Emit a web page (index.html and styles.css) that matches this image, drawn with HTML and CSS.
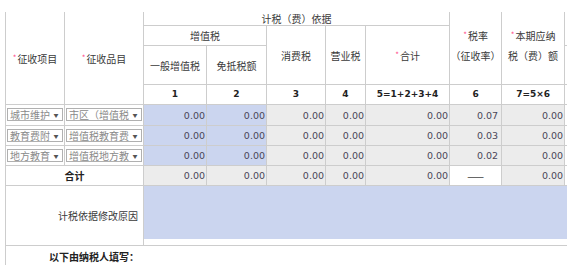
FILE: index.html
```html
<!DOCTYPE html>
<html lang="zh">
<head>
<meta charset="utf-8">
<link rel="stylesheet" href="styles.css">
</head>
<body>
<div class="page">
<table class="grid">
  <colgroup>
    <col class="c1"><col class="c2"><col class="c3"><col class="c4"><col class="c5">
    <col class="c6"><col class="c7"><col class="c8"><col class="c9"><col class="c10">
  </colgroup>
  <tr class="r1">
    <td rowspan="4" class="hd"><span class="req">*</span>征收项目</td>
    <td rowspan="4" class="hd"><span class="req">*</span>征收品目</td>
    <td colspan="5" class="hd">计税（费）依据</td>
    <td rowspan="3" class="hd two"><span class="req">*</span>税率<br>（征收率）</td>
    <td rowspan="3" class="hd two"><span class="req">*</span>本期应纳<br>税（费）额</td>
    <td rowspan="2" class="hd"></td>
  </tr>
  <tr class="r2">
    <td colspan="2" class="hd">增值税</td>
    <td rowspan="2" class="hd">消费税</td>
    <td rowspan="2" class="hd">营业税</td>
    <td rowspan="2" class="hd"><span class="req">*</span>合计</td>
  </tr>
  <tr class="r3">
    <td class="hd">一般增值税</td>
    <td class="hd">免抵税额</td>
    <td class="hd"></td>
  </tr>
  <tr class="r4">
    <td class="no">1</td><td class="no">2</td><td class="no">3</td><td class="no">4</td>
    <td class="no">5=1+2+3+4</td><td class="no">6</td><td class="no">7=5×6</td><td class="no"></td>
  </tr>
  <tr class="d1">
    <td class="selcell"><div class="sel"><span class="seltxt">城市维护建设税</span><span class="arr">▼</span></div></td>
    <td class="selcell"><div class="sel"><span class="seltxt">市区（增值税附征）</span><span class="arr">▼</span></div></td>
    <td class="num blue">0.00</td><td class="num blue">0.00</td>
    <td class="num gray">0.00</td><td class="num gray">0.00</td><td class="num gray">0.00</td>
    <td class="num gray rate">0.07</td><td class="num gray">0.00</td><td class="extra"><div class="box"></div></td>
  </tr>
  <tr class="d2">
    <td class="selcell"><div class="sel"><span class="seltxt">教育费附加</span><span class="arr">▼</span></div></td>
    <td class="selcell"><div class="sel"><span class="seltxt">增值税教育费附加</span><span class="arr">▼</span></div></td>
    <td class="num blue">0.00</td><td class="num blue">0.00</td>
    <td class="num gray">0.00</td><td class="num gray">0.00</td><td class="num gray">0.00</td>
    <td class="num gray rate">0.03</td><td class="num gray">0.00</td><td class="extra"><div class="box"></div></td>
  </tr>
  <tr class="d3">
    <td class="selcell"><div class="sel"><span class="seltxt">地方教育附加</span><span class="arr">▼</span></div></td>
    <td class="selcell"><div class="sel"><span class="seltxt">增值税地方教育附加</span><span class="arr">▼</span></div></td>
    <td class="num blue">0.00</td><td class="num blue">0.00</td>
    <td class="num gray">0.00</td><td class="num gray">0.00</td><td class="num gray">0.00</td>
    <td class="num gray rate">0.02</td><td class="num gray">0.00</td><td class="extra"><div class="box"></div></td>
  </tr>
  <tr class="tot">
    <td colspan="2" class="totlabel">合计</td>
    <td class="num gray">0.00</td><td class="num gray">0.00</td>
    <td class="num gray">0.00</td><td class="num gray">0.00</td><td class="num gray">0.00</td>
    <td class="dash">——</td><td class="num gray">0.00</td><td class="extra"></td>
  </tr>
  <tr class="reason">
    <td colspan="2" class="reasonlabel">计税依据修改原因</td>
    <td colspan="8" class="reasoncell"><div class="area"></div></td>
  </tr>
  <tr class="fill">
    <td colspan="10" class="filllabel">以下由纳税人填写：</td>
  </tr>
</table>
</div>
</body>
</html>
```

FILE: styles.css
```css
html, body {
  margin: 0;
  padding: 0;
  background: #ffffff;
  overflow: hidden;
}

.page {
  padding: 12px 0 0 5px;
  width: 700px;
}

.grid {
  border-collapse: collapse;
  table-layout: fixed;
  width: 620px;
  font-family: "Noto Sans CJK SC", "Noto Sans", sans-serif;
  font-size: 10px;
  color: #3a3a3a;
}

.c1 { width: 59px; }
.c2 { width: 79px; }
.c3 { width: 63px; }
.c4 { width: 60px; }
.c5 { width: 59px; }
.c6 { width: 40px; }
.c7 { width: 84px; }
.c8 { width: 52px; }
.c9 { width: 63px; }
.c10 { width: 61px; }

.grid td {
  border: 1px solid #cdcdcd;
  padding: 0;
  line-height: 13px;
  overflow: hidden;
  white-space: nowrap;
}

.r1 td { border-top: 0; }

.r1 { height: 13px; }
.r2 { height: 20px; }
.r3 { height: 39px; }
.r4 { height: 20px; }
.d1 { height: 21px; }
.d2 { height: 20px; }
.d3 { height: 20px; }
.tot { height: 20px; }
.reason { height: 60px; }
.fill { height: 22px; }

.hd {
  text-align: center;
  vertical-align: middle;
}

.hd.two {
  line-height: 20px;
  padding-bottom: 6px;
}

.req {
  color: #ff4d8a;
  font-size: 8px;
  vertical-align: 2px;
  margin-right: 1px;
}

.no {
  text-align: center;
  font-family: "DejaVu Sans", Verdana, sans-serif;
  font-weight: bold;
  font-size: 9px;
  color: #222;
}

.num {
  text-align: right;
  padding-right: 1px !important;
  font-family: "DejaVu Sans", Verdana, sans-serif;
  font-size: 9.5px;
  color: #4a4658;
}

.num.rate { padding-right: 3px !important; }

.blue { background: #cbd5ef; }
.gray { background: #ececec; }

.selcell {
  padding: 0 1px !important;
  vertical-align: middle;
}

.sel {
  display: flex;
  align-items: center;
  height: 11px;
  border: 1px solid #b0b0b0;
  background: #ffffff;
  margin-top: -1px;
}

.seltxt {
  flex: 1;
  overflow: hidden;
  white-space: nowrap;
  color: #8a8a8a;
  font-size: 10px;
  line-height: 11px;
  padding-left: 2px;
}

.arr {
  width: 12px;
  text-align: center;
  font-size: 5px;
  line-height: 11px;
  color: #555;
}

.extra {
  border-right: 0 !important;
  padding-left: 1px !important;
  vertical-align: middle;
}

.box {
  height: 12px;
  border: 1px solid #b0b0b0;
  margin-left: 1px;
}

.totlabel {
  text-align: center;
  font-weight: bold;
  color: #222;
}

.dash {
  text-align: center;
  color: #444;
  background: #ffffff;
}

.reasonlabel {
  text-align: right;
  padding-right: 5px !important;
  vertical-align: middle;
}

.reasoncell {
  vertical-align: top;
  border-right: 0 !important;
}

.area {
  height: 53px;
  background: #cbd5ef;
}

.filllabel {
  padding-left: 43px !important;
  font-weight: bold;
  color: #222;
  border-right: 0 !important;
  border-bottom: 0 !important;
  vertical-align: middle;
}
```
